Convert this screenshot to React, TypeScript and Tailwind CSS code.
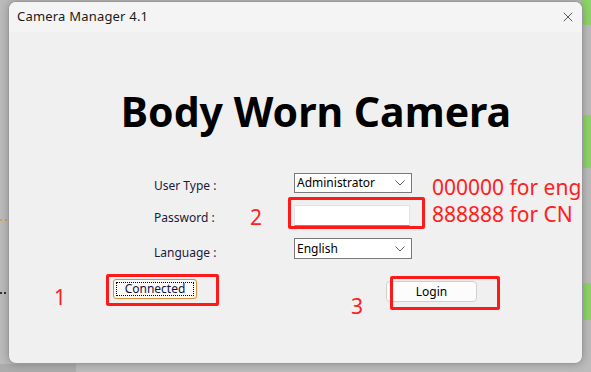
import { X } from "lucide-react";

function Chevron() {
  return (
    <svg width="10" height="6" viewBox="0 0 10 6" className="text-[#606060]">
      <polyline points="0.5,0.5 5,5 9.5,0.5" fill="none" stroke="currentColor" strokeWidth="1" />
    </svg>
  );
}

function Select({ value, h }: { value: string; h: string }) {
  return (
    <div className={`flex w-[118px] items-center justify-between border border-[#7a7a7a] bg-white pl-[2px] pr-[6px] text-[12px] text-black ${h}`}>
      <span>{value}</span>
      <Chevron />
    </div>
  );
}

export default function App() {
  return (
    <div
      className="relative h-[372px] w-[591px] overflow-hidden bg-[#bcbcbc]"
      style={{ fontFamily: '"Noto Sans", "Open Sans", sans-serif' }}
    >
      {/* desktop bits behind the window */}
      <div className="absolute right-0 top-0 h-[25px] w-[10px] bg-[#8fd46b]" />
      <div className="absolute right-0 top-[115px] h-[53px] w-[10px] bg-[#8fd46b]" />
      <div className="absolute right-0 top-[283px] h-[37px] w-[10px] bg-[#8fd46b]" />
      <div className="absolute left-0 top-[219px] w-[7px] border-t-2 border-dotted border-[#e0a040]" />
      <div className="absolute left-0 top-[292px] w-[6px] border-t-2 border-dotted border-[#333]" />
      <div className="absolute bottom-0 left-0 h-[8px] w-[76px] bg-[#acacac]" />

      {/* window */}
      <div className="absolute left-[8px] top-[1px] flex h-[363px] w-[575px] flex-col overflow-hidden rounded-[8px] border border-[#9a9a9a] bg-[#f0f0f0] shadow-[0_0_10px_rgba(0,0,0,0.25)]">
        <div className="flex h-[30px] shrink-0 items-center justify-between bg-[#f4f4f4] pl-[8px] pr-[6px]">
          <span className="text-[13px] tracking-[0.2px] text-[#1a1a1a]">Camera Manager 4.1</span>
          <X className="h-[16px] w-[16px] text-[#333]" strokeWidth={1.2} />
        </div>

        <div className="relative flex flex-1 flex-col">
          <h1 className="mt-[55px] pl-[41px] text-center text-[41px] font-bold leading-[48px] text-black">
            Body Worn Camera
          </h1>

          <div className="mt-[38px] flex flex-col gap-[12px] pl-[145px] text-[12px] leading-[16px] text-[#1a1a3a]">
            <div className="flex h-[20px] items-start">
              <span className="mt-[5px] w-[140px]">User Type :</span>
              <Select value="Administrator" h="h-[20px]" />
            </div>
            <div className="flex h-[21px] items-start">
              <span className="mt-[5px] w-[140px]">Password :</span>
              <div className="h-[21px] w-[116px] border border-[#e3e3e3] border-b-[#8a8a8a] bg-white" />
            </div>
            <div className="flex h-[21px] items-start">
              <span className="mt-[7px] w-[140px]">Language :</span>
              <Select value="English" h="h-[21px]" />
            </div>
          </div>

          <div className="mt-[20px] flex items-start pl-[104px] text-[12px] text-black">
            <div className="flex h-[20px] w-[84px] items-center justify-center rounded-[3px] border border-[#d4903a] bg-[#fcfaf6] p-[2px]">
              <div className="flex h-full w-full items-center justify-center border border-dotted border-black text-[#101040]">
                Connected
              </div>
            </div>
            <div className="ml-[189px] mt-[2px] flex h-[21px] w-[91px] items-center justify-center rounded-[4px] border border-[#d0d0d0] bg-[#fcfcfc]">
              Login
            </div>
          </div>

          {/* red annotations */}
          <div className="absolute left-[97px] top-[242px] h-[32px] w-[113px] rounded-[2px] border-[3px] border-[#ff1a1a]" />
          <div className="absolute left-[279px] top-[165px] h-[32px] w-[137px] rounded-[2px] border-[3px] border-[#ff1a1a]" />
          <div className="absolute left-[381px] top-[244px] h-[34px] w-[110px] rounded-[2px] border-[3px] border-[#ff1a1a]" />
          <span className="absolute left-[45px] top-[253px] text-[21px] leading-[24px] text-[#ff2020]">1</span>
          <span className="absolute left-[241px] top-[173px] text-[21px] leading-[24px] text-[#ff2020]">2</span>
          <span className="absolute left-[342px] top-[262px] text-[21px] leading-[24px] text-[#ff2020]">3</span>
          <div className="absolute left-[423px] top-[142px] whitespace-nowrap text-[21px] leading-[27px] text-[#ff2020]">
            <div>000000 for eng</div>
            <div>888888 for CN</div>
          </div>
        </div>
      </div>
    </div>
  );
}
